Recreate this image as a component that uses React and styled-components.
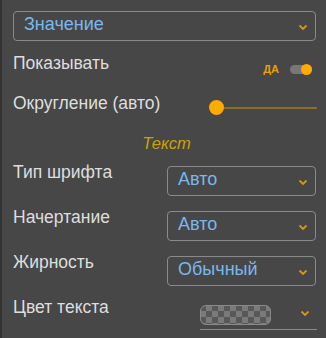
import React from "react";
import styled, { createGlobalStyle } from "styled-components";

const GlobalStyle = createGlobalStyle`
  html, body {
    margin: 0;
    padding: 0;
    background: #474747;
  }
  * {
    box-sizing: border-box;
  }
`;

const Panel = styled.div`
  width: 326px;
  height: 338px;
  background: #474747;
  border-left: 2px solid #333;
  padding: 11px 10px 0 11px;
  font-family: "Liberation Sans", Arial, sans-serif;
  color: #dedede;
  overflow: hidden;
`;

const Select = styled.div`
  display: flex;
  align-items: center;
  justify-content: space-between;
  width: ${(p) => p.width || "100%"};
  height: 30px;
  margin-top: ${(p) => p.mt || 0}px;
  border: 1px solid #8a8a8a;
  border-radius: 4px;
  padding: 0 7px 3px 10px;
  color: #78b8ee;
  font-size: 18px;
`;

const ChevronBox = styled.div`
  display: flex;
  margin-top: ${(p) => p.mt || 5}px;
`;

const Chevron = ({ mt }) => (
  <ChevronBox mt={mt}>
    <svg width="10" height="7" viewBox="0 0 10 7">
      <path d="M1.5 1.5 L5 5 L8.5 1.5" fill="none" stroke="#d6961a" strokeWidth="1.8" />
    </svg>
  </ChevronBox>
);

const Row = styled.div`
  display: flex;
  align-items: flex-start;
  justify-content: space-between;
  height: ${(p) => p.h}px;
`;

const Label = styled.div`
  font-size: 17.5px;
  line-height: 20px;
  margin-top: ${(p) => p.mt || 0}px;
`;

const ToggleWrap = styled.div`
  display: flex;
  align-items: center;
  gap: 11px;
  margin-top: 22px;
  margin-right: 4px;
`;

const Yes = styled.span`
  font-size: 11px;
  font-weight: bold;
  color: #e6a200;
`;

const Track = styled.div`
  position: relative;
  width: 22px;
  height: 9px;
  border-radius: 5px;
  background: #777;
`;

const Knob = styled.div`
  position: absolute;
  right: 0;
  top: -1px;
  width: 11px;
  height: 11px;
  border-radius: 50%;
  background: #ffab00;
`;

const Slider = styled.div`
  position: relative;
  width: 108px;
  height: 16px;
  margin-top: 20px;
  margin-right: -1px;
  display: flex;
  align-items: center;
`;

const SliderTrack = styled.div`
  margin-left: 8px;
  flex: 1;
  height: 2px;
  background: #8c6c28;
`;

const SliderThumb = styled.div`
  position: absolute;
  left: 0;
  top: 0;
  width: 15px;
  height: 15px;
  border-radius: 50%;
  background: #ffab00;
`;

const Section = styled.div`
  text-align: center;
  font-style: italic;
  font-size: 16.5px;
  line-height: 20px;
  color: #c9a400;
  padding: 5px 0 0 4px;
  height: 34px;
`;

const ColorPick = styled.div`
  width: 117px;
  height: 29px;
  margin-top: 4px;
  margin-right: -1px;
  border-bottom: 1px solid #8a8a8a;
  display: flex;
  align-items: flex-start;
  justify-content: space-between;
  padding: 4px 7px 0 0;
`;

const Swatch = styled.div`
  width: 71px;
  height: 20px;
  border-radius: 6px;
  border: 1px solid #8a8a8a;
  background-color: #5a5a5a;
  background-image: conic-gradient(#7a7a7a 25%, #585858 0 50%, #7a7a7a 0 75%, #585858 0);
  background-size: 12px 12px;
  background-position: -1px -1px;
`;

function App() {
  return (
    <>
      <GlobalStyle />
      <Panel>
        <Select>
          Значение
          <Chevron />
        </Select>
        <Row h={39}>
          <Label mt={12}>Показывать</Label>
          <ToggleWrap>
            <Yes>ДА</Yes>
            <Track>
              <Knob />
            </Track>
          </ToggleWrap>
        </Row>
        <Row h={48}>
          <Label mt={13}>Округление (авто)</Label>
          <Slider>
            <SliderThumb />
            <SliderTrack />
          </Slider>
        </Row>
        <Section>Текст</Section>
        <Row h={45}>
          <Label>Тип шрифта</Label>
          <Select width="149px" mt={4}>
            Авто
            <Chevron />
          </Select>
        </Row>
        <Row h={45}>
          <Label>Начертание</Label>
          <Select width="149px" mt={4}>
            Авто
            <Chevron />
          </Select>
        </Row>
        <Row h={45}>
          <Label>Жирность</Label>
          <Select width="149px" mt={4}>
            Обычный
            <Chevron />
          </Select>
        </Row>
        <Row h={40}>
          <Label>Цвет текста</Label>
          <ColorPick>
            <Swatch />
            <Chevron mt={5} />
          </ColorPick>
        </Row>
      </Panel>
    </>
  );
}

export default App;
